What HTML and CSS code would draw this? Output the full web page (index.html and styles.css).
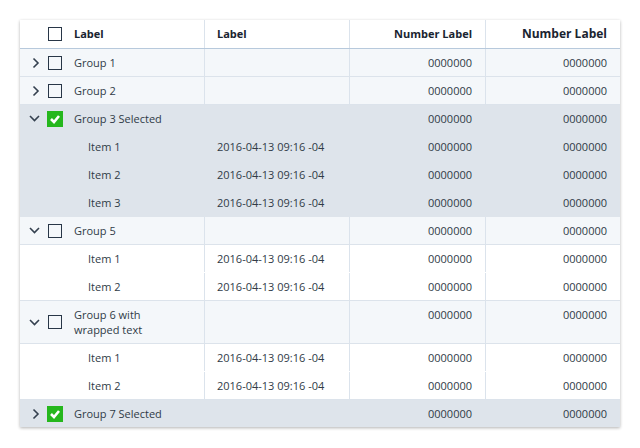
FILE: index.html
```html
<!DOCTYPE html>
<html>
<head>
<meta charset="utf-8">
<link rel="stylesheet" href="styles.css">
</head>
<body>
<div class="card">
  <div class="row head">
    <div class="cell first"><span class="tog"></span><span class="cb"></span><span class="txt">Label</span></div>
    <div class="cell">Label</div>
    <div class="cell num">Number Label</div>
    <div class="cell num big">Number Label</div>
  </div>

  <div class="row group">
    <div class="cell first"><span class="tog"><svg width="8" height="12" viewBox="0 0 8 12"><path d="M1.5 1.5 L6 6 L1.5 10.5" fill="none" stroke="#34404f" stroke-width="1.6"/></svg></span><span class="cb"></span><span class="txt">Group 1</span></div>
    <div class="cell"></div>
    <div class="cell num">0000000</div>
    <div class="cell num">0000000</div>
  </div>

  <div class="row group">
    <div class="cell first"><span class="tog"><svg width="8" height="12" viewBox="0 0 8 12"><path d="M1.5 1.5 L6 6 L1.5 10.5" fill="none" stroke="#34404f" stroke-width="1.6"/></svg></span><span class="cb"></span><span class="txt">Group 2</span></div>
    <div class="cell"></div>
    <div class="cell num">0000000</div>
    <div class="cell num">0000000</div>
  </div>

  <div class="row group sel">
    <div class="cell first"><span class="tog down"><svg width="11" height="7" viewBox="0 0 11 7"><path d="M1 1 L5.5 5.5 L10 1" fill="none" stroke="#34404f" stroke-width="1.6"/></svg></span><span class="cb on"><svg width="12" height="10" viewBox="0 0 12 10"><path d="M2 5 L5 8 L10 2" fill="none" stroke="#fff" stroke-width="2.6"/></svg></span><span class="txt">Group 3 Selected</span></div>
    <div class="cell"></div>
    <div class="cell num">0000000</div>
    <div class="cell num">0000000</div>
  </div>
  <div class="row item sel">
    <div class="cell first"><span class="itxt">Item 1</span></div>
    <div class="cell">2016-04-13 09:16 -04</div>
    <div class="cell num">0000000</div>
    <div class="cell num">0000000</div>
  </div>
  <div class="row item sel">
    <div class="cell first"><span class="itxt">Item 2</span></div>
    <div class="cell">2016-04-13 09:16 -04</div>
    <div class="cell num">0000000</div>
    <div class="cell num">0000000</div>
  </div>
  <div class="row item sel end">
    <div class="cell first"><span class="itxt">Item 3</span></div>
    <div class="cell">2016-04-13 09:16 -04</div>
    <div class="cell num">0000000</div>
    <div class="cell num">0000000</div>
  </div>

  <div class="row group">
    <div class="cell first"><span class="tog down"><svg width="11" height="7" viewBox="0 0 11 7"><path d="M1 1 L5.5 5.5 L10 1" fill="none" stroke="#34404f" stroke-width="1.6"/></svg></span><span class="cb"></span><span class="txt">Group 5</span></div>
    <div class="cell"></div>
    <div class="cell num">0000000</div>
    <div class="cell num">0000000</div>
  </div>
  <div class="row item">
    <div class="cell first"><span class="itxt">Item 1</span></div>
    <div class="cell">2016-04-13 09:16 -04</div>
    <div class="cell num">0000000</div>
    <div class="cell num">0000000</div>
  </div>
  <div class="row item end">
    <div class="cell first"><span class="itxt">Item 2</span></div>
    <div class="cell">2016-04-13 09:16 -04</div>
    <div class="cell num">0000000</div>
    <div class="cell num">0000000</div>
  </div>

  <div class="row group">
    <div class="cell first"><span class="tog down"><svg width="11" height="7" viewBox="0 0 11 7"><path d="M1 1 L5.5 5.5 L10 1" fill="none" stroke="#34404f" stroke-width="1.6"/></svg></span><span class="cb"></span><span class="txt">Group 6 with<br>wrapped text</span></div>
    <div class="cell"></div>
    <div class="cell num">0000000</div>
    <div class="cell num">0000000</div>
  </div>
  <div class="row item">
    <div class="cell first"><span class="itxt">Item 1</span></div>
    <div class="cell">2016-04-13 09:16 -04</div>
    <div class="cell num">0000000</div>
    <div class="cell num">0000000</div>
  </div>
  <div class="row item end">
    <div class="cell first"><span class="itxt">Item 2</span></div>
    <div class="cell">2016-04-13 09:16 -04</div>
    <div class="cell num">0000000</div>
    <div class="cell num">0000000</div>
  </div>

  <div class="row group sel last">
    <div class="cell first"><span class="tog"><svg width="8" height="12" viewBox="0 0 8 12"><path d="M1.5 1.5 L6 6 L1.5 10.5" fill="none" stroke="#34404f" stroke-width="1.6"/></svg></span><span class="cb on"><svg width="12" height="10" viewBox="0 0 12 10"><path d="M2 5 L5 8 L10 2" fill="none" stroke="#fff" stroke-width="2.6"/></svg></span><span class="txt">Group 7 Selected</span></div>
    <div class="cell"></div>
    <div class="cell num">0000000</div>
    <div class="cell num">0000000</div>
  </div>
</div>
</body>
</html>
```
FILE: styles.css
```css
html, body {
  margin: 0;
  padding: 0;
  background: #ffffff;
}
body {
  padding: 20px;
  font-family: "Open Sans", "Noto Sans", sans-serif;
  font-size: 11px;
  color: #303b47;
}
.card {
  width: 600px;
  background: #fff;
  box-shadow: 0 1px 3px rgba(0, 0, 0, 0.3);
}
.row {
  display: grid;
  grid-template-columns: 184px 145px 136px 135px;
  border-bottom: 1px solid #dce3eb;
}
.cell {
  padding: 6px 13px 6px 12px;
  line-height: 15px;
  border-left: 1px solid #dbe3ec;
  white-space: nowrap;
}
.cell.first {
  border-left: none;
  padding: 6px 0 6px 12px;
  display: flex;
  align-items: center;
}
.num {
  text-align: right;
}
.head {
  height: 28px;
  border-bottom-color: #b7c9dc;
  font-weight: 700;
  color: #1a2430;
}
.head .cell {
  line-height: 16px;
}
.head .big {
  font-size: 12px;
}
.tog {
  width: 14px;
  height: 14px;
  display: flex;
  align-items: center;
  justify-content: flex-start;
  flex: none;
}
.tog.down svg {
  margin-left: -3px;
}
.cb {
  width: 12px;
  height: 12px;
  border: 1px solid #283647;
  margin-left: 2px;
  margin-right: 12px;
  flex: none;
  display: flex;
  align-items: center;
  justify-content: center;
}
.cb.on {
  width: 16px;
  height: 16px;
  border: none;
  margin: -1px 11px -1px 1px;
  background: #25b71d;
}
.txt {
  white-space: normal;
}
.group {
  background: #f4f7fa;
}
.item {
  background: #fff;
  border-bottom-color: #fff;
}
.item.end {
  border-bottom-color: #dce3eb;
}
.item .cell.first {
  padding-left: 68px;
}
.row.sel {
  background: #dee4eb;
  border-bottom-color: #dee4eb;
}
.row.sel .cell {
  border-left-color: transparent;
}
.row.last {
  border-bottom: none;
}
```
